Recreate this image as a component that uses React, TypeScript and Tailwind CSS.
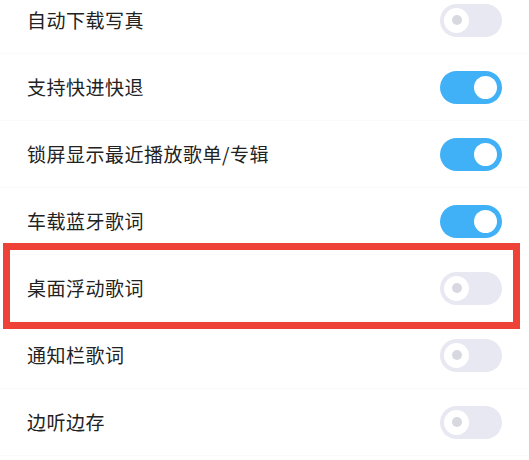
const rows = [
  { label: "自动下载写真", on: false },
  { label: "支持快进快退", on: true },
  { label: "锁屏显示最近播放歌单/专辑", on: true },
  { label: "车载蓝牙歌词", on: true },
  { label: "桌面浮动歌词", on: false, marked: true },
  { label: "通知栏歌词", on: false },
  { label: "边听边存", on: false },
];

function Toggle({ on }: { on: boolean }) {
  if (on) {
    return (
      <div className="w-[62px] h-[33px] rounded-full bg-[#40b1f6] flex items-center justify-end pr-[5px]">
        <div className="w-[23px] h-[23px] rounded-full bg-white" />
      </div>
    );
  }
  return (
    <div className="w-[62px] h-[33px] rounded-full bg-[#e8e8f2] flex items-center pl-[4px]">
      <div className="w-[25px] h-[25px] rounded-full bg-white flex items-center justify-center">
        <div className="w-[10px] h-[10px] rounded-full bg-[#d8d8e0]" />
      </div>
    </div>
  );
}

export default function App() {
  return (
    <div
      className="w-[529px] h-[460px] bg-white overflow-hidden"
      style={{ fontFamily: '"Noto Sans CJK SC", "Noto Sans", sans-serif' }}
    >
      <div className="-mt-[13px] flex flex-col">
        {rows.map((r) => (
          <div
            key={r.label}
            className="relative h-[67px] flex items-center justify-between pl-[27px] pr-[27px] border-b border-[#fafafb]"
          >
            <span className="text-[19px] text-[#222222] tracking-[0.5px]">{r.label}</span>
            <Toggle on={r.on} />
            {r.marked && (
              <div className="absolute left-[3px] right-[9px] -top-[12px] -bottom-[8px] border-[7px] border-[#ee4137]" />
            )}
          </div>
        ))}
      </div>
    </div>
  );
}
